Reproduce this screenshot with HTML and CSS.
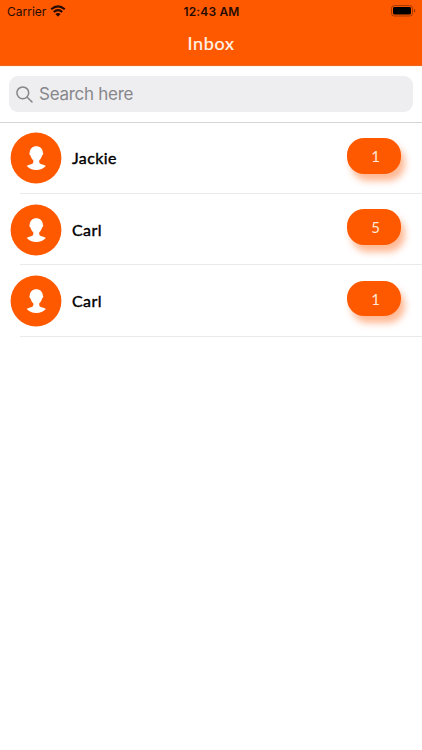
FILE: index.html
```html
<!DOCTYPE html>
<html lang="en">
<head>
<meta charset="utf-8">
<title>Inbox</title>
<link rel="stylesheet" href="styles.css">
</head>
<body>
<svg width="0" height="0" class="defs">
  <symbol id="person" viewBox="0 0 52 52">
    <circle cx="26" cy="26" r="25.400" fill="#ff5900"/>
    <path transform="translate(16.300 14)" d="M10 .2C6.200.2 3.400 2.700 3.500 6.500C2.700 6.700 2.900 8.900 4.200 9.600C4.700 11.800 5.800 13.400 7.100 14.500C7.400 16.900 6.500 17.800 4 18.600C2.300 19.100 1.100 19.400.5 20C3 22.500 6 24 10 24S17 22.500 19.500 20C18.900 19.400 17.700 19.100 16 18.600C13.500 17.800 12.600 16.900 12.900 14.500C14.200 13.400 15.300 11.800 15.800 9.600C17.100 8.900 17.300 6.700 16.500 6.500C16.600 2.700 13.800.2 10 .2Z" fill="#fff"/>
  </symbol>
</svg>
<header class="header">
  <div class="status">
    <div class="carrier"><span>Carrier</span>
      <svg class="wifi" width="16" height="12" viewBox="0 0 16 12" fill="none" stroke="#260c00" stroke-width="2.100"><path d="M1.200 4.300Q8-1.600 14.800 4.300M3.700 7Q8 3.400 12.300 7"/><path d="M5.400 9Q8 6.800 10.600 9L8 11.700Z" fill="#260c00" stroke="none"/></svg>
    </div>
    <div class="clock">12:43 AM</div>
    <div class="power"><svg width="25" height="12" viewBox="0 0 25 12"><rect x=".5" y=".6" width="21" height="10.400" rx="2.800" fill="none" stroke="#a33900"/><rect x="2" y="2.100" width="18" height="7.400" rx="1.400" fill="#000"/><path d="M23 4v3.600q1.300-.5 1.300-1.800T23 4" fill="#8f3200"/></svg></div>
  </div>
  <h1 class="title">Inbox</h1>
</header>
<div class="search-area">
  <div class="search">
    <svg width="17" height="17" viewBox="0 0 17 17" fill="none" stroke="#85858a" stroke-width="1.500" stroke-linecap="round"><circle cx="6.800" cy="6.800" r="5.900"/><path d="M11.200 11.200L16 16"/></svg>
    <span>Search here</span>
  </div>
</div>
<main class="list">
  <div class="row"><svg class="avatar" width="52" height="52"><use href="#person"/></svg><span class="name">Jackie</span><span class="badge">1</span></div>
  <div class="row"><svg class="avatar" width="52" height="52"><use href="#person"/></svg><span class="name">Carl</span><span class="badge">5</span></div>
  <div class="row"><svg class="avatar" width="52" height="52"><use href="#person"/></svg><span class="name">Carl</span><span class="badge">1</span></div>
</main>
</body>
</html>
```
FILE: styles.css
```css
* { box-sizing: border-box; }
body { margin: 0; background: #fff; font-family: Inter, sans-serif; }
.defs { display: block; }
.header { height: 66px; background: #ff5900; border-bottom: 1px solid #ee6524; }
.status { display: grid; grid-template-columns: 1fr auto 1fr; height: 22px; padding: 0 6px 0 7px; align-items: center; color: #260c00; }
.carrier { display: flex; align-items: center; gap: 4px; font-size: 12px; letter-spacing: 0; }
.clock { font-size: 12px; font-weight: 600; letter-spacing: .15px; }
.power { display: flex; justify-content: flex-end; }
.title { margin: 0; height: 43px; text-align: center; color: #fff5e9; font: 400 18px/42px Lato, sans-serif; letter-spacing: .65px; -webkit-text-stroke: .2px #fff5e9; }
.search-area { height: 57px; padding: 9px 9px 0 8.5px; border-bottom: 1px solid #d6d6d8; border-top: 1px solid #fff6ea; }
.search { display: flex; align-items: center; height: 36px; padding-left: 7.500px; gap: 6px; border-radius: 9px; background: #eeeef0; color: #87878b; font-size: 17px; letter-spacing: -.27px; }
.list { margin-top: -.4px; }
.row { display: flex; align-items: center; height: 71.33px; padding: 0 21px 0 10px; background: linear-gradient(#e9e9eb, #e9e9eb) 20px 100% / 100% 1px no-repeat; }
.avatar { display: block; flex: none; }
.name { margin: 0 0 0 10px; color: #000; font: 400 16px/22px Lato, sans-serif; letter-spacing: .4px; -webkit-text-stroke: .4px #000; }
.badge { width: 54px; height: 35.6px; margin: 0 0 5px auto; padding-left: 3px; border-radius: 17px; background: #ff5900; box-shadow: 4px 7px 7px rgba(255, 89, 0, .42); color: #ffe8d5; text-align: center; font: 400 15px/37px Lato, sans-serif; }
```
